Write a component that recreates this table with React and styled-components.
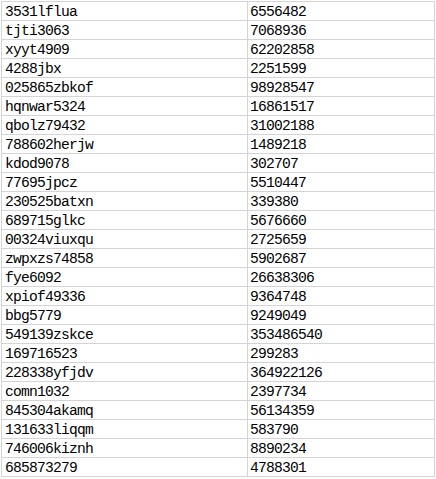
import React from 'react'
import styled, { createGlobalStyle } from 'styled-components'

const GlobalStyle = createGlobalStyle`
  html, body {
    margin: 0;
    padding: 0;
    background: #ffffff;
  }
`

const Sheet = styled.div`
  padding: 1px 0 0 1px;
  background: #ffffff;
`

const Grid = styled.div`
  display: grid;
  grid-template-columns: 246px 187px;
  grid-auto-rows: 19px;
  width: max-content;
  border-top: 1px solid #d4d4d4;
  border-left: 1px solid #d4d4d4;
`

const Cell = styled.div`
  box-sizing: border-box;
  border-right: 1px solid #d4d4d4;
  border-bottom: 1px solid #d4d4d4;
  padding: 2px 0 0 ${({ $first }) => ($first ? '3px' : '2px')};
  font-family: "Liberation Mono", "DejaVu Sans Mono", monospace;
  font-size: 14.67px;
  letter-spacing: -0.8px;
  line-height: 17px;
  color: #000000;
  white-space: nowrap;
  overflow: hidden;
`

const rows = [
  ['3531lflua', '6556482'],
  ['tjti3063', '7068936'],
  ['xyyt4909', '62202858'],
  ['4288jbx', '2251599'],
  ['025865zbkof', '98928547'],
  ['hqnwar5324', '16861517'],
  ['qbolz79432', '31002188'],
  ['788602herjw', '1489218'],
  ['kdod9078', '302707'],
  ['77695jpcz', '5510447'],
  ['230525batxn', '339380'],
  ['689715glkc', '5676660'],
  ['00324viuxqu', '2725659'],
  ['zwpxzs74858', '5902687'],
  ['fye6092', '26638306'],
  ['xpiof49336', '9364748'],
  ['bbg5779', '9249049'],
  ['549139zskce', '353486540'],
  ['169716523', '299283'],
  ['228338yfjdv', '364922126'],
  ['comn1032', '2397734'],
  ['845304akamq', '56134359'],
  ['131633liqqm', '583790'],
  ['746006kiznh', '8890234'],
  ['685873279', '4788301'],
]

const App = () => {
  return (
    <>
      <GlobalStyle />
      <Sheet>
        <Grid>
          {rows.map(([name, value], i) => (
            <React.Fragment key={i}>
              <Cell $first>{name}</Cell>
              <Cell>{value}</Cell>
            </React.Fragment>
          ))}
        </Grid>
      </Sheet>
    </>
  )
}

export default App
